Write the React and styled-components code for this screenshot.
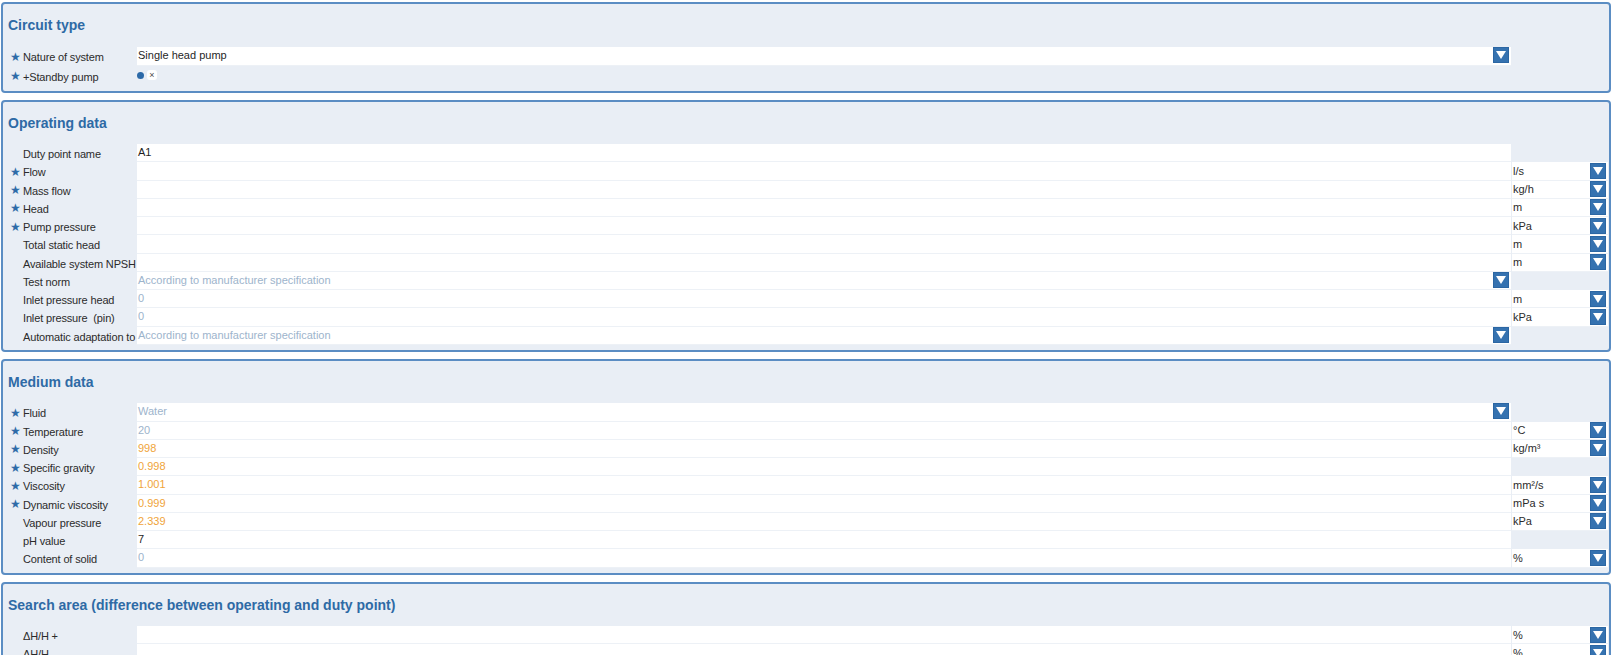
import React from "react";
import styled, { createGlobalStyle } from "styled-components";

const GlobalStyle = createGlobalStyle`
  html, body {
    margin: 0;
    padding: 0;
    background: #ffffff;
    overflow: hidden;
  }
  body {
    font-family: "Liberation Sans", Arial, sans-serif;
    font-size: 11px;
    color: #2b2b2b;
  }
`;

const Page = styled.div`
  display: flex;
  flex-direction: column;
  gap: 7px;
  padding: 2px 4px 0 1px;
`;

const Panel = styled.section`
  background: #e9eef5;
  border: 2px solid #5b8dc3;
  border-radius: 4px;
  padding: 0 1px 5px 0;
`;

const Title = styled.h2`
  margin: 0;
  box-sizing: border-box;
  height: 42.5px;
  padding: 12px 0 0 5px;
  font-size: 14px;
  line-height: 18px;
  font-weight: bold;
  color: #2e6aa5;
`;

const Row = styled.div`
  display: grid;
  grid-template-columns: 13px 114px 1fr 97px;
  height: ${(p) => p.$h || 18.25}px;
  padding-left: 7px;
`;

const Star = styled.span`
  display: flex;
  align-items: center;
  padding-top: 1px;
  font-size: 11.5px;
  color: #2e6ba8;
`;

const Label = styled.span`
  position: relative;
  z-index: 1;
  display: flex;
  align-items: center;
  padding-top: 2px;
  white-space: pre;
  letter-spacing: -0.15px;
  color: #2b2b2b;
`;

const toneColor = {
  dark: "#1f1f1f",
  muted: "#9db4cc",
  orange: "#f0a43a",
};

const Field = styled.div`
  display: flex;
  align-items: center;
  justify-content: space-between;
  background: #ffffff;
  border-bottom: 1px solid #edf1f6;
  padding: 0 2px 1px 1px;
  color: ${(p) => toneColor[p.$tone] || toneColor.dark};
  white-space: nowrap;
  overflow: hidden;
`;

const Plain = styled.div`
  display: flex;
  align-items: center;
`;

const Unit = styled(Field)`
  margin-left: 1px;
  color: #2b2b2b;
  padding-top: 1px;
`;

const Toggle = styled.div`
  display: flex;
  align-items: center;
  gap: 3px;
  padding-bottom: 1px;
`;

const Dot = styled.span`
  width: 7px;
  height: 7px;
  border-radius: 50%;
  background: #2d6aa8;
`;

const Cross = styled.span`
  display: flex;
  align-items: center;
  justify-content: center;
  width: 10px;
  height: 10px;
  border-radius: 3px;
  background: #ffffff;
  font-size: 9px;
  line-height: 10px;
  color: #4a4a4a;
`;

const Arrow = () => (
  <svg width="16" height="16" viewBox="0 0 16 16">
    <rect x="0" y="0" width="16" height="16" fill="#2b66a3" />
    <rect x="1" y="1" width="14" height="14" fill="#3572b0" />
    <polygon points="3,4 13,4 8,12" fill="#ffffff" />
  </svg>
);

const Line = ({ row }) => (
  <Row $h={row.h}>
    <Star>{row.star ? "★" : ""}</Star>
    <Label>{row.label}</Label>
    {row.toggle ? (
      <Toggle>
        <Dot />
        <Cross>×</Cross>
      </Toggle>
    ) : (
      <Field $tone={row.tone}>
        <span>{row.value || ""}</span>
        {row.select && <Arrow />}
      </Field>
    )}
    {row.unit ? (
      <Unit>
        <span>{row.unit}</span>
        <Arrow />
      </Unit>
    ) : (
      <Plain />
    )}
  </Row>
);

const sections = [
  {
    title: "Circuit type",
    rows: [
      { label: "Nature of system", star: true, value: "Single head pump", select: true, h: 19.5 },
      { label: "+Standby pump", star: true, toggle: true, h: 19.5 },
    ],
  },
  {
    title: "Operating data",
    rows: [
      { label: "Duty point name", value: "A1" },
      { label: "Flow", star: true, unit: "l/s" },
      { label: "Mass flow", star: true, unit: "kg/h" },
      { label: "Head", star: true, unit: "m" },
      { label: "Pump pressure", star: true, unit: "kPa" },
      { label: "Total static head", unit: "m" },
      { label: "Available system NPSH", unit: "m" },
      { label: "Test norm", value: "According to manufacturer specification", tone: "muted", select: true },
      { label: "Inlet pressure head", value: "0", tone: "muted", unit: "m" },
      { label: "Inlet pressure  (pin)", value: "0", tone: "muted", unit: "kPa" },
      { label: "Automatic adaptation to", value: "According to manufacturer specification", tone: "muted", select: true },
    ],
  },
  {
    title: "Medium data",
    rows: [
      { label: "Fluid", star: true, value: "Water", tone: "muted", select: true },
      { label: "Temperature", star: true, value: "20", tone: "muted", unit: "°C" },
      { label: "Density", star: true, value: "998", tone: "orange", unit: "kg/m³" },
      { label: "Specific gravity", star: true, value: "0.998", tone: "orange" },
      { label: "Viscosity", star: true, value: "1.001", tone: "orange", unit: "mm²/s" },
      { label: "Dynamic viscosity", star: true, value: "0.999", tone: "orange", unit: "mPa s" },
      { label: "Vapour pressure", value: "2.339", tone: "orange", unit: "kPa" },
      { label: "pH value", value: "7" },
      { label: "Content of solid", value: "0", tone: "muted", unit: "%" },
    ],
  },
  {
    title: "Search area (difference between operating and duty point)",
    rows: [
      { label: "ΔH/H +", unit: "%" },
      { label: "ΔH/H -", unit: "%" },
    ],
  },
];

export default function App() {
  return (
    <>
      <GlobalStyle />
      <Page>
        {sections.map((s) => (
          <Panel key={s.title}>
            <Title>{s.title}</Title>
            {s.rows.map((r) => (
              <Line key={r.label} row={r} />
            ))}
          </Panel>
        ))}
      </Page>
    </>
  );
}
